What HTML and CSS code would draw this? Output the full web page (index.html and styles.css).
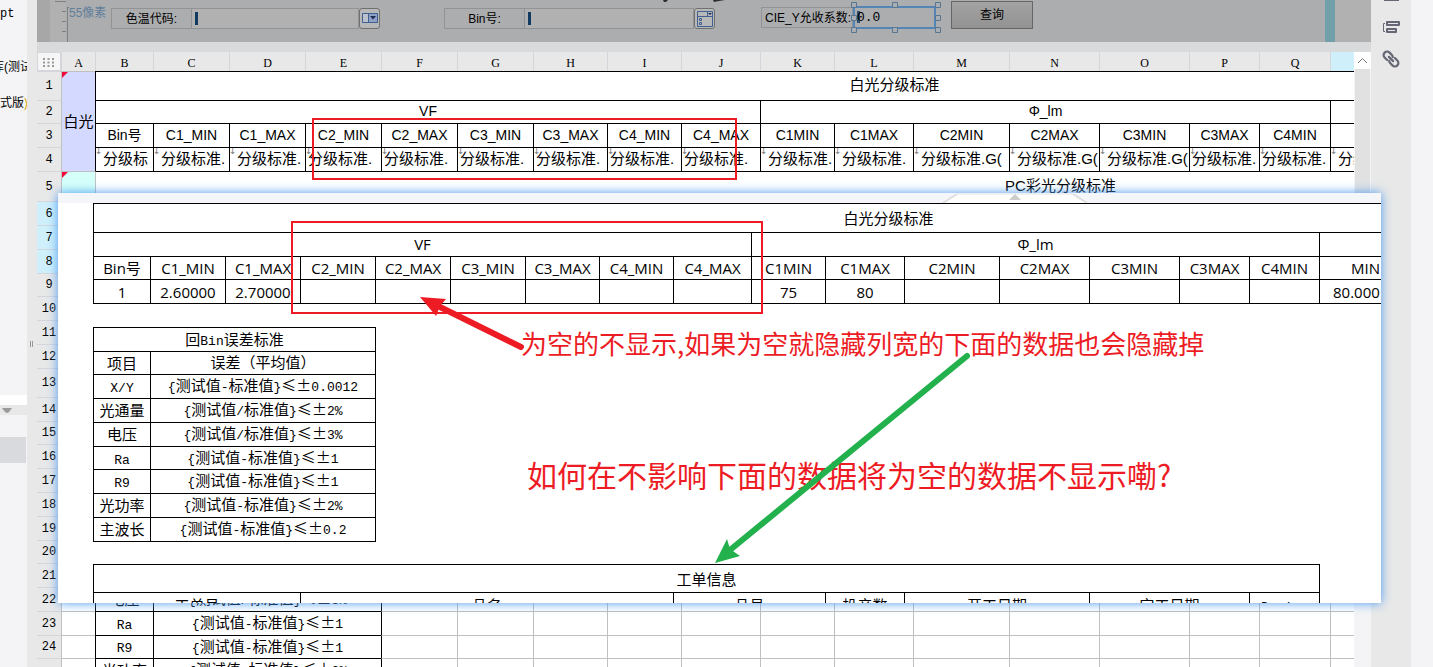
FILE: index.html
```html
<!DOCTYPE html>
<html lang="zh-CN">
<head>
<meta charset="utf-8">
<title>白光分级标准</title>
<link rel="stylesheet" href="styles.css">
</head>
<body>
<div class="app">
  <aside class="tree">
    <div class="tree-files"><p class="tree-item mono">pt</p><p class="tree-item back">库(测试版)</p><p class="tree-item">式版<span class="mark">)</span></p></div>
    <div class="tree-blank"></div>
    <div class="tree-bar"><svg width="10" height="6" viewBox="0 0 10 6"><path d="M0 0H10L7 4L5 5L3 4Z" fill="#999"/></svg></div>
    <div class="tree-block"></div>
  </aside>
  <div class="gutter"><i></i><i></i></div>
  <main class="main">
    <form class="ribbon">
      <svg class="ruler" width="32" height="42" viewBox="0 0 32 42"><path fill="#a7a7a7" d="M0 0H13V42H0Z"/><path fill="#b1b1b1" d="M13 0H29V42H13Z"/><path d="M18 1.500H29M25 11.500H29M25 21.500H29M25 31.500H29M30.500 7V42M30 7.500H37" stroke="#7f8081" fill="none"/></svg>
      <span class="size">55像素</span>
      <div class="field first"><label for="cct">色温代码:</label><input id="cct" type="text"><button type="button" aria-label="选择色温代码"><svg width="17" height="13" viewBox="0 0 17 13"><path d="M1.500 1.500H16.500V10.500H1.500Z" fill="#bac0cc" stroke="#3f6091"/><path d="M7.500 1.500H16.500V10.500H7.500Z" fill="#8fa0c4" stroke="#3f6091"/><path d="M9 4H15L12 7.500Z" fill="#1c2c59"/></svg></button></div>
      <div class="field second"><label for="bin">Bin号:</label><input id="bin" type="text"><button type="button" aria-label="选择Bin号"><svg width="17" height="17" viewBox="0 0 17 17"><path d="M1.500 1.500H16.500V16.500H1.500ZM1.500 6.500H16.500M11.500 1.500V6.500" fill="none" stroke="#3f6091"/><path d="M12 3H16L14 5Z" fill="#1c2c59"/><path d="M3.500 8.500H5.500V10.500H3.500ZM3.500 12.500H5.500V14.500H3.500Z" fill="none" stroke="#3f6091"/></svg></button></div>
      <div class="field third"><label for="cie">CIE_Y允收系数:</label><div class="picked"><input id="cie" type="text" value="0.0"><svg class="handles" width="93" height="33" viewBox="0 0 93 33"><g fill="#aaaeb2" stroke="#587691"><path d="M2.500 2.500h5v5h-5zM43.500 2.500h5v5h-5zM86.500 2.500h5v5h-5zM2.500 15.500h5v5h-5zM86.500 15.500h5v5h-5zM2.500 27.500h5v5h-5zM43.500 27.500h5v5h-5zM86.500 27.500h5v5h-5z"/></g></svg></div></div>
      <button class="query" type="button">查询</button>
      <span class="teal"></span>
      <svg class="marks" width="64" height="3" viewBox="0 0 64 3"><path d="M0 0H5L3 2H1ZM50 0H62L56 1L51 2Z" fill="#2d2d2d"/></svg>
    </form>
    <div class="band"></div>
    <div class="sheet-area">
      <div class="sheet-clip">
      <table class="sheet">
        <colgroup><col class="w24"><col class="w34"><col class="w58"><col class="w76"><col class="w76"><col class="w76"><col class="w76"><col class="w76"><col class="w74"><col class="w74"><col class="w79"><col class="w74"><col class="w79"><col class="w96"><col class="w90"><col class="w90"><col class="w70"><col class="w71"><col class="w363"><col class="w332"></colgroup>
        <tr class="letters"><th class="corner"><svg width="11" height="9" viewBox="0 0 11 9"><path d="M0 1h2M4.500 1h2M9 1h2M0 4.500h2M4.500 4.500h2M9 4.500h2M0 8h2M4.500 8h2M9 8h2" stroke="#999" stroke-width="2"/></svg></th><th>A</th><th>B</th><th>C</th><th>D</th><th>E</th><th>F</th><th>G</th><th>H</th><th>I</th><th>J</th><th>K</th><th>L</th><th>M</th><th>N</th><th>O</th><th>P</th><th>Q</th><th class="on"></th><th class="on"></th></tr>
        <tr class="h29"><th>1</th><td class="side lilac" rowspan="4">白光</td><td class="k up" colspan="17">白光分级标准</td><td class="k"></td></tr>
        <tr class="h23"><th>2</th><td class="k latin up" colspan="9">VF</td><td class="k latin up" colspan="7">Φ_lm</td><td class="k" colspan="2"></td></tr>
        <tr class="h24 latin"><th>3</th><td class="k">Bin号</td><td class="k">C1_MIN</td><td class="k">C1_MAX</td><td class="k">C2_MIN</td><td class="k">C2_MAX</td><td class="k">C3_MIN</td><td class="k">C3_MAX</td><td class="k">C4_MIN</td><td class="k">C4_MAX</td><td class="k">C1MIN</td><td class="k">C1MAX</td><td class="k">C2MIN</td><td class="k">C2MAX</td><td class="k">C3MIN</td><td class="k">C3MAX</td><td class="k">C4MIN</td><td class="k" colspan="2"></td></tr>
        <tr class="h24 expr"><th>4</th><td class="k in">分级标</td><td class="k in">分级标准.</td><td class="k in">分级标准.</td><td class="k">分级标准.</td><td class="k">分级标准.</td><td class="k">分级标准.</td><td class="k">分级标准.</td><td class="k">分级标准.</td><td class="k">分级标准.</td><td class="k in">分级标准.</td><td class="k in">分级标准.</td><td class="k in">分级标准.G(</td><td class="k in">分级标准.G(</td><td class="k in">分级标准.G(</td><td class="k">分级标准.</td><td class="k">分级标准.</td><td class="k in" colspan="2">分级标准.</td></tr>
        <tr class="h30"><th>5</th><td class="side mint" rowspan="2"></td><td class="kt up" colspan="18">PC彩光分级标准</td></tr>
        <tr class="h24"><th class="on">6</th><td colspan="18"></td></tr>
        <tr class="h24"><th class="on">7</th><td colspan="19"></td></tr>
        <tr class="h24"><th class="on">8</th><td colspan="19"></td></tr>
        <tr class="h23"><th>9</th><td colspan="19"></td></tr>
        <tr class="h24"><th>10</th><td colspan="19"></td></tr>
        <tr class="h24"><th>11</th><td colspan="19"></td></tr>
        <tr class="h24"><th>12</th><td colspan="19"></td></tr>
        <tr class="h29"><th>13</th><td colspan="19"></td></tr>
        <tr class="h24"><th>14</th><td colspan="19"></td></tr>
        <tr class="h23"><th>15</th><td colspan="19"></td></tr>
        <tr class="h24"><th>16</th><td colspan="19"></td></tr>
        <tr class="h24"><th>17</th><td colspan="19"></td></tr>
        <tr class="h24"><th>18</th><td colspan="19"></td></tr>
        <tr class="h24"><th>19</th><td colspan="19"></td></tr>
        <tr class="h23"><th>20</th><td colspan="19"></td></tr>
        <tr class="h24"><th>21</th><td colspan="19"></td></tr>
        <tr class="h24"><th>22</th><td></td><td class="k">电压</td><td class="k rule" colspan="3"><i>{</i>测试值<i>/</i>标准值<i>}</i><b>≤</b><b>±</b><i>3%</i></td><td class="kl"></td><td></td><td></td><td></td><td></td><td></td><td></td><td></td><td></td><td></td><td></td><td></td><td></td><td></td></tr>
        <tr class="h24"><th>23</th><td></td><td class="k"><i>Ra</i></td><td class="k rule" colspan="3"><i>{</i>测试值<i>-</i>标准值<i>}</i><b>≤</b><b>±</b><i>1</i></td><td class="kl"></td><td></td><td></td><td></td><td></td><td></td><td></td><td></td><td></td><td></td><td></td><td></td><td></td><td></td></tr>
        <tr class="h23"><th>24</th><td></td><td class="k"><i>R9</i></td><td class="k rule" colspan="3"><i>{</i>测试值<i>-</i>标准值<i>}</i><b>≤</b><b>±</b><i>1</i></td><td class="kl"></td><td></td><td></td><td></td><td></td><td></td><td></td><td></td><td></td><td></td><td></td><td></td><td></td><td></td></tr>
        <tr class="h24"><th></th><td></td><td class="k">光功率</td><td class="k rule" colspan="3"><i>{</i>测试值<i>-</i>标准值<i>}</i><b>≤</b><b>±</b><i>2%</i></td><td class="kl"></td><td></td><td></td><td></td><td></td><td></td><td></td><td></td><td></td><td></td><td></td><td></td><td></td><td></td></tr>
      </table>
      </div>
      <div class="scroll"><button type="button" aria-label="向上滚动"><svg width="11" height="7" viewBox="0 0 11 7"><path d="M1 6L5.500 1.500L10 6" fill="none" stroke="#777"/></svg></button><span></span></div>
    </div>
  </main>
  <nav class="tools">
    <svg width="20" height="72" viewBox="0 0 20 72"><g fill="none" stroke="#666775" stroke-width="2"><path d="M3 0H18"/><path d="M6 22H18V25H6ZM6 29H15V32H6Z" stroke-linejoin="round"/><path d="M4 23.500H2.500V31.500H4" stroke-width="1"/><g transform="rotate(45 10 59)" stroke-width="2.200" stroke-linecap="round"><path d="M8 62.500H4.500A3.500 3.500 0 0 1 4.500 55.500H8A3.500 3.500 0 0 1 10 56.500"/><path d="M12 55.500H15.500A3.500 3.500 0 0 1 15.500 62.500H12A3.500 3.500 0 0 1 10 61.500"/><path d="M7 59H13"/></g></g></svg>
  </nav>
  <div class="edge"></div>
</div>

<section class="preview">
  <div class="preview-top"><svg class="tab" width="144" height="10" viewBox="0 0 144 10"><path d="M0 10L14 1H130L144 10Z" fill="#fff"/><path d="M0 10L14 1M130 1L144 10" fill="none" stroke="#e0e0e0" stroke-width="2"/><path d="M14 1H130" fill="none" stroke="#e6e6e8"/><path d="M66 7L72 1L78 7Z" fill="#ccc"/></svg></div>
  <table class="grid wide">
    <colgroup><col class="w57"><col class="w75"><col class="w75"><col class="w75"><col class="w75"><col class="w75"><col class="w74"><col class="w74"><col class="w78"><col class="w74"><col class="w79"><col class="w95"><col class="w90"><col class="w90"><col class="w70"><col class="w70"><col class="w92"><col class="w272"></colgroup>
    <tr class="h29"><td colspan="18">白光分级标准</td></tr>
    <tr class="h24"><td class="up" colspan="9">VF</td><td class="up" colspan="7">Φ_lm</td><td colspan="2"></td></tr>
    <tr class="h23"><td>Bin号</td><td>C1_MIN</td><td>C1_MAX</td><td>C2_MIN</td><td>C2_MAX</td><td>C3_MIN</td><td>C3_MAX</td><td>C4_MIN</td><td>C4_MAX</td><td>C1MIN</td><td>C1MAX</td><td>C2MIN</td><td>C2MAX</td><td>C3MIN</td><td>C3MAX</td><td>C4MIN</td><td>MIN</td><td></td></tr>
    <tr class="h25"><td>1</td><td>2.60000</td><td>2.70000</td><td></td><td></td><td></td><td></td><td></td><td></td><td>75</td><td>80</td><td></td><td></td><td></td><td></td><td></td><td class="cut">80.000</td><td></td></tr>
  </table>
  <table class="grid error">
    <colgroup><col class="w57"><col class="w226"></colgroup>
    <tr class="h24"><td colspan="2">回<i>Bin</i>误差标准</td></tr>
    <tr class="h23"><td>项目</td><td class="up">误差（平均值）</td></tr>
    <tr class="h24"><td><i>X/Y</i></td><td class="rule"><i>{</i>测试值<i>-</i>标准值<i>}</i><b>≤</b><b>±</b><i>0.0012</i></td></tr>
    <tr class="h24"><td class="up">光通量</td><td class="rule"><i>{</i>测试值<i>/</i>标准值<i>}</i><b>≤</b><b>±</b><i>2%</i></td></tr>
    <tr class="h24"><td class="up">电压</td><td class="rule"><i>{</i>测试值<i>/</i>标准值<i>}</i><b>≤</b><b>±</b><i>3%</i></td></tr>
    <tr class="h23"><td><i>Ra</i></td><td class="rule"><i>{</i>测试值<i>-</i>标准值<i>}</i><b>≤</b><b>±</b><i>1</i></td></tr>
    <tr class="h24"><td><i>R9</i></td><td class="rule"><i>{</i>测试值<i>-</i>标准值<i>}</i><b>≤</b><b>±</b><i>1</i></td></tr>
    <tr class="h24"><td class="up">光功率</td><td class="rule"><i>{</i>测试值<i>-</i>标准值<i>}</i><b>≤</b><b>±</b><i>2%</i></td></tr>
    <tr class="h25"><td class="up">主波长</td><td class="rule"><i>{</i>测试值<i>-</i>标准值<i>}</i><b>≤</b><b>±</b><i>0.2</i></td></tr>
  </table>
  <table class="grid order">
    <colgroup><col class="w207"><col class="w373"><col class="w152"><col class="w79"><col class="w185"><col class="w160"><col class="w71"></colgroup>
    <tr class="h28"><td colspan="7">工单信息</td></tr>
    <tr class="h25"><td>工单号</td><td>品名</td><td>品号</td><td>投产数</td><td>开工日期</td><td>完工日期</td><td><i>Device</i></td></tr>
  </table>
</section>

<div class="box box-a"></div>
<div class="box box-b"></div>
<svg class="arrows" width="1433" height="667" viewBox="0 0 1433 667"><path d="M521 347L438 306" stroke="#ed1c24" stroke-width="6" stroke-linecap="round"/><path d="M420 297L446 299L440 306L436 316Z" fill="#ed1c24"/></svg>
<p class="note note-a">为空的不显示,如果为空就隐藏列宽的下面的数据也会隐藏掉</p>
<p class="note note-b">如何在不影响下面的数据将为空的数据不显示嘞?</p>
<svg class="arrows" width="1433" height="667" viewBox="0 0 1433 667"><path d="M967 356L730 550" stroke="#22b14c" stroke-width="6" stroke-linecap="round"/><path d="M715 563L727 539L730 549L740 556Z" fill="#22b14c"/></svg>
</body>
</html>
```
FILE: styles.css
```css
* { box-sizing: border-box; }
body { margin: 0; height: 100vh; overflow: hidden; position: relative; font-family: "Liberation Sans", "Noto Sans CJK SC", sans-serif; font-size: 15px; color: #000; background: #f4f4f6; }
p { margin: 0; }
svg { display: block; }
.app { display: flex; height: 100vh; overflow: hidden; }

.tree { width: 27px; flex: none; overflow: hidden; display: flex; flex-direction: column; font-size: 12px; }
.tree-files { height: 395px; padding-top: 4px; }
.tree-item { height: 20px; line-height: 20px; white-space: nowrap; margin-bottom: 33px; }
.tree-item.mono { font-family: "Liberation Mono", monospace; }
.tree-item.back { margin-left: -8px; margin-bottom: 16px; }
.mark { color: #d8a800; }
.tree-blank { height: 10px; background: #fff; }
.tree-bar { height: 10px; background: #e8e8e8; padding: 3px 2px; }
.tree-block { width: 26px; height: 26px; margin-top: 22px; background: #d9dade; }
.gutter { width: 10px; flex: none; background: #e8e8e8; display: flex; gap: 1px; align-items: center; justify-content: center; padding: 20px 1px 0 0; }
.gutter i { width: 1px; height: 6px; background: #999; }

.main { flex: 1; min-width: 0; display: flex; flex-direction: column; }
.ribbon { position: relative; height: 42px; display: flex; align-items: flex-start; background: #acadaf; font-size: 12px; overflow: hidden; }
.marks { position: absolute; left: 626px; top: 0; }
.ruler { flex: none; }
.size { width: 42px; flex: none; font-size: 12px; line-height: 16px; padding-top: 5px; color: #627f9b; white-space: nowrap; }
.field { display: flex; flex: none; margin-top: 8px; height: 21px; }
.field label { width: 81px; border: 1px solid #929394; line-height: 20px; text-align: center; white-space: nowrap; }
.field input { width: 167px; min-width: 0; border: 1px solid #929394; border-left: 0; padding: 0; background: linear-gradient(#123a60, #123a60) 3px 3px / 3px 13px no-repeat #b1b1b1; }
.field button { width: 21px; border: 1px solid #707070; border-radius: 3px; background: #b8b8b8; padding: 0; display: flex; align-items: center; justify-content: center; }
.second { margin-left: 64px; }
.second input { width: 169px; }
.third { margin: 7px 0 0 46px; }
.third label { width: 92px; text-align: left; padding-left: 3px; font-size: 12px; }
.picked { position: relative; margin-top: -1px; height: 23px; }
.picked input { width: 83px; height: 23px; border: 2px solid #5585b5; background: linear-gradient(#2e506f, #2e506f) 2px 3px / 3px 12px no-repeat #acadaf; font: 13px "Liberation Mono", monospace; padding-left: 2px; }
.handles { position: absolute; left: -4px; top: -6px; pointer-events: none; }
.query { margin: 1px 0 0 15px; width: 82px; height: 28px; flex: none; border: 1px solid #666; background: linear-gradient(#a3a3a3, #929292); padding: 0 0 2px; font: 12px/16px "Noto Sans CJK SC", sans-serif; }
.teal { margin-left: auto; width: 46px; flex: none; height: 42px; border-left: 10px solid #719faa; background: #b1b1b1; }
.band { height: 10px; flex: none; background: #d9dadc; }

.sheet-area { flex: 1; display: flex; min-height: 0; }
.sheet-clip { flex: 1; min-width: 0; overflow: hidden; background: #fff; }
table { table-layout: fixed; border-collapse: separate; border-spacing: 0; width: 0; }
td, th { padding: 0; overflow: hidden; white-space: nowrap; text-align: center; vertical-align: middle; line-height: 18px; font-weight: 400; }
.sheet td { border-left: 1px solid #c0c0c0; border-top: 1px solid #c0c0c0; }
.sheet td.k { border-color: #000; }
.sheet td.kl { border-left-color: #000; }
.sheet td.kt { border-top-color: #000; }
td.up { padding-bottom: 2px; }
.sheet th { background: #e8e8e8; font: 12px/14px "Liberation Mono", monospace; border-top: 1px solid #d5d6dc; }
.sheet .letters th { height: 19px; border-top: 0; border-left: 1px solid #d5d6dc; font: 12px/14px "Liberation Serif", serif; padding-top: 3px; }
.sheet .letters .corner { background: #f6f6f6; border: 1px solid #d5d6dc; padding: 1px 0 0 5px; }
.sheet th.on, .sheet .letters th.on { background: #cff0fb; }
.latin, .latin td { font-size: 14px; }
.latin td, .expr td { padding-bottom: 2px; }
.sheet .side { position: relative; overflow: visible; }
.side::before { content: ""; position: absolute; left: 0; top: 0; border-top: 6px solid #ed0a3a; border-right: 6px solid transparent; }
.lilac { background: #d4d9ff; }
.mint { background: #d5fff9; }
.expr td { position: relative; text-align: left; padding-left: 2px; }
.expr td.in { padding-left: 7px; }
.expr td::before { content: "↓"; position: absolute; left: -1px; top: -1px; font: 9px/9px "DejaVu Sans", sans-serif; color: #777; }

.scroll { width: 17px; flex: none; display: flex; flex-direction: column; background: #f4f4f6; }
.scroll button { height: 17px; border: 0; background: #fff; padding: 0 3px; }
.scroll span { height: 532px; background: #e1e1e1; margin: 0 1px; }
.tools { width: 40px; flex: none; background: #e8e8e8; padding-left: 10px; }
.edge { width: 22px; flex: none; }

.preview { position: absolute; left: 58px; right: 52px; top: 193px; height: 410px; overflow: hidden; background: #fff; box-shadow: 0 0 10px #4a98ee; }
.preview-top { height: 10px; background: #f5f6f9; position: relative; }
.tab { position: absolute; left: 885px; top: 0; }
.grid { margin-left: 35px; font-family: "Open Sans", "Noto Sans CJK SC", sans-serif; }
.grid td { border-left: 1px solid #000; border-top: 1px solid #000; }
.wide tr:last-child td, .error tr:last-child td { border-bottom: 1px solid #000; }
.grid td.cut { text-align: left; padding-left: 13px; }
.error { margin-top: 23px; }
.error td:last-child { border-right: 1px solid #000; }
.order { margin-top: 22px; }
.order td:last-child { border-right: 1px solid #000; }
td i { font: 13px "Liberation Mono", monospace; }
td b { font-weight: 400; display: inline-block; width: 15px; line-height: 16px; text-align: center; font-family: "Noto Sans CJK SC", sans-serif; }
.grid td.rule, .rule { font-family: "Liberation Sans", "Noto Sans CJK SC", sans-serif; padding-bottom: 1px; }

.box { position: absolute; border: 2px solid #ed1c24; }
.box-a { left: 312px; top: 118px; width: 425px; height: 62px; }
.box-b { left: 291px; top: 221px; width: 472px; height: 93px; }
.arrows { position: absolute; left: 0; top: 0; pointer-events: none; }
.note { position: absolute; color: #ed1c24; white-space: nowrap; font-family: "Noto Sans CJK SC", sans-serif; }
.note-a { left: 521px; top: 327px; font-size: 26px; line-height: 32px; }
.note-b { left: 527px; top: 457px; font-size: 30px; line-height: 34px; }

.h23 { height: 23px; } .h24 { height: 24px; } .h25 { height: 25px; } .h28 { height: 28px; } .h29 { height: 29px; } .h30 { height: 30px; }
.w24 { width: 24px; } .w34 { width: 34px; } .w57 { width: 57px; } .w58 { width: 58px; } .w70 { width: 70px; } .w71 { width: 71px; }
.w74 { width: 74px; } .w75 { width: 75px; } .w76 { width: 76px; } .w78 { width: 78px; } .w79 { width: 79px; } .w90 { width: 90px; }
.w92 { width: 92px; } .w95 { width: 95px; } .w96 { width: 96px; } .w152 { width: 152px; } .w160 { width: 160px; } .w185 { width: 185px; }
.w207 { width: 207px; } .w226 { width: 226px; } .w272 { width: 272px; } .w332 { width: 332px; } .w363 { width: 363px; } .w373 { width: 373px; }
```
